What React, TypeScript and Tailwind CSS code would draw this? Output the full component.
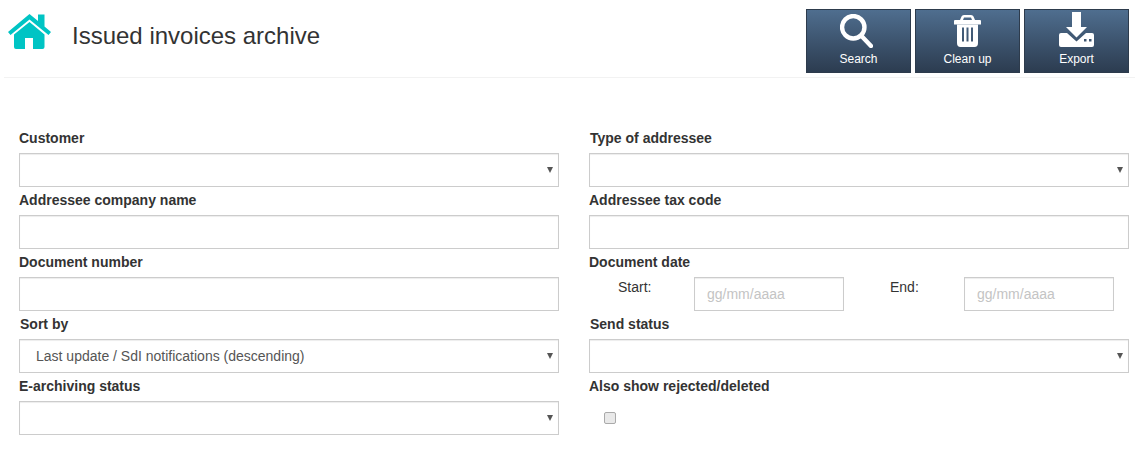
const font = "font-['Liberation_Sans',Arial,sans-serif]";

const HomeIcon = () => (
    <svg width="43" height="35" viewBox="0 0 43 35" className="text-[#00c4c4]" fill="currentColor">
        <path d="M21.500 0 L30 7 V0.500 H36.500 V12.500 L43 18 L40.500 21 L21.500 5.500 L2.500 21 L0 18 Z" />
        <path d="M21.500 8 L36.500 20.500 V33 Q36.500 35 34.500 35 H25 V24 H17 V35 H8 Q6 35 6 33 V20.500 Z" />
    </svg>
);

const SearchIcon = () => (
    <svg width="33" height="34" viewBox="0 0 33 34" fill="none" stroke="white" className="mt-[4px] mr-[4px]">
        <circle cx="13.250" cy="13.250" r="11.200" strokeWidth="4.400" />
        <path d="M21.500 22 L31 32" strokeWidth="4.400" strokeLinecap="round" />
    </svg>
);

const TrashIcon = () => (
    <svg width="27" height="32" viewBox="0 0 27 32" fill="white" className="mt-[5px]">
        <path
            fillRule="evenodd"
            d="M1 5 H6 L7.500 1.500 Q8 0 10 0 H17 Q19 0 19.500 1.500 L21 5 H26 Q27 5 27 6 V9.500 H0 V6 Q0 5 1 5 Z M9 5 H18 L17 2.500 H10 Z"
        />
        <path
            fillRule="evenodd"
            d="M3 9.500 H24 V28 Q24 32 20.500 32 H6.500 Q3 32 3 28 Z M8 12.500 V26.500 H10 V12.500 Z M12.500 12.500 V26.500 H14.500 V12.500 Z M17 12.500 V26.500 H19 V12.500 Z"
        />
    </svg>
);

const ExportIcon = () => (
    <svg width="35" height="35" viewBox="0 0 35 35" fill="white" className="mt-[2px]">
        <path d="M13 0 H22 V15 H28 L17.500 25.500 L7 15 H13 Z" />
        <path
            fillRule="evenodd"
            d="M2 21 H8 L17.500 29.500 L27 21 H33 Q35 21 35 23 V33 Q35 35 33 35 H2 Q0 35 0 33 V23 Q0 21 2 21 Z M25 27 V29.500 H27.500 V27 Z M30 27 V29.500 H32.500 V27 Z"
        />
    </svg>
);

const ToolButton = ({ label, icon }: { label: string; icon: React.ReactNode }) => (
    <button className="w-[105px] h-[64px] flex flex-col items-center bg-gradient-to-b from-[#4f6e8f] to-[#2c3c50] border border-[#2d3b4c] text-white text-[12px] leading-[14px]">
        <div className="h-[41px] flex items-start justify-center">{icon}</div>
        <span className="mt-[1px]">{label}</span>
    </button>
);

const Label = ({ text, className = "" }: { text: string; className?: string }) => (
    <label className={`block h-[27px] pt-[4px] text-[14px] leading-[16px] font-bold text-[#333] ${className}`}>{text}</label>
);

const SelectField = ({ label, value = "", labelClass }: { label: string; value?: string; labelClass?: string }) => (
    <div>
        <Label text={label} className={labelClass} />
        <div className="relative">
            <select
                defaultValue={value}
                className="block w-full h-[34px] pl-[16px] appearance-none bg-white border border-[#ccc] text-[14px] text-[#555] shadow-[inset_0_1px_1px_rgba(0,0,0,0.075)]"
            >
                <option value={value}>{value}</option>
            </select>
            <span className="absolute right-[6px] top-[14px] w-0 h-0 border-x-[3.5px] border-x-transparent border-t-[6px] border-t-[#555]"></span>
        </div>
    </div>
);

const TextField = ({ label }: { label: string }) => (
    <div>
        <Label text={label} />
        <input
            type="text"
            className="block w-full h-[34px] px-3 bg-white border border-[#ccc] text-[14px] text-[#555] shadow-[inset_0_1px_1px_rgba(0,0,0,0.075)]"
        />
    </div>
);

const DateInput = () => (
    <input
        type="text"
        placeholder="gg/mm/aaaa"
        className="block w-[150px] h-[34px] px-3 bg-white border border-[#ccc] text-[14px] text-[#555] placeholder:text-[#c4c4c4] shadow-[inset_0_1px_1px_rgba(0,0,0,0.075)]"
    />
);

export default function App() {
    return (
        <div className={`w-[1135px] h-[452px] bg-white overflow-hidden ${font}`}>
            {/* Header */}
            <div className="ml-[4px] h-[78px] border-b border-[#f2f2f2] flex items-start">
                <div className="ml-[4px] mt-[14px]">
                    <HomeIcon />
                </div>
                <h1 className="ml-[21px] mt-[22px] text-[24px] leading-[28px] text-[#333]">Issued invoices archive</h1>
                <div className="ml-auto mr-[6px] mt-[9px] flex gap-[4px]">
                    <ToolButton label="Search" icon={<SearchIcon />} />
                    <ToolButton label="Clean up" icon={<TrashIcon />} />
                    <ToolButton label="Export" icon={<ExportIcon />} />
                </div>
            </div>

            {/* Form */}
            <div className="pt-[48px] pl-[19px] pr-[6px] grid grid-cols-[540px_540px] gap-x-[30px] gap-y-[1px]">
                <SelectField label="Customer" />
                <SelectField label="Type of addressee" labelClass="pl-[1px]" />
                <TextField label="Addressee company name" />
                <TextField label="Addressee tax code" />
                <TextField label="Document number" />
                <div>
                    <Label text="Document date" />
                    <div className="flex text-[14px] leading-[16px] text-[#333]">
                        <span className="ml-[29px] w-[76px] pt-[2px]">Start:</span>
                        <DateInput />
                        <span className="ml-[46px] w-[74px] pt-[2px]">End:</span>
                        <DateInput />
                    </div>
                </div>
                <SelectField label="Sort by" value="Last update / SdI notifications (descending)" labelClass="pl-[1px]" />
                <SelectField label="Send status" labelClass="pl-[1px]" />
                <SelectField label="E-archiving status" />
                <div>
                    <Label text="Also show rejected/deleted" />
                    <input
                        type="checkbox"
                        className="block ml-[15px] mt-[11px] w-[12px] h-[12px] appearance-none rounded-[2px] border border-[#aaa] bg-[#e9e9e9]"
                    />
                </div>
            </div>
        </div>
    );
}
